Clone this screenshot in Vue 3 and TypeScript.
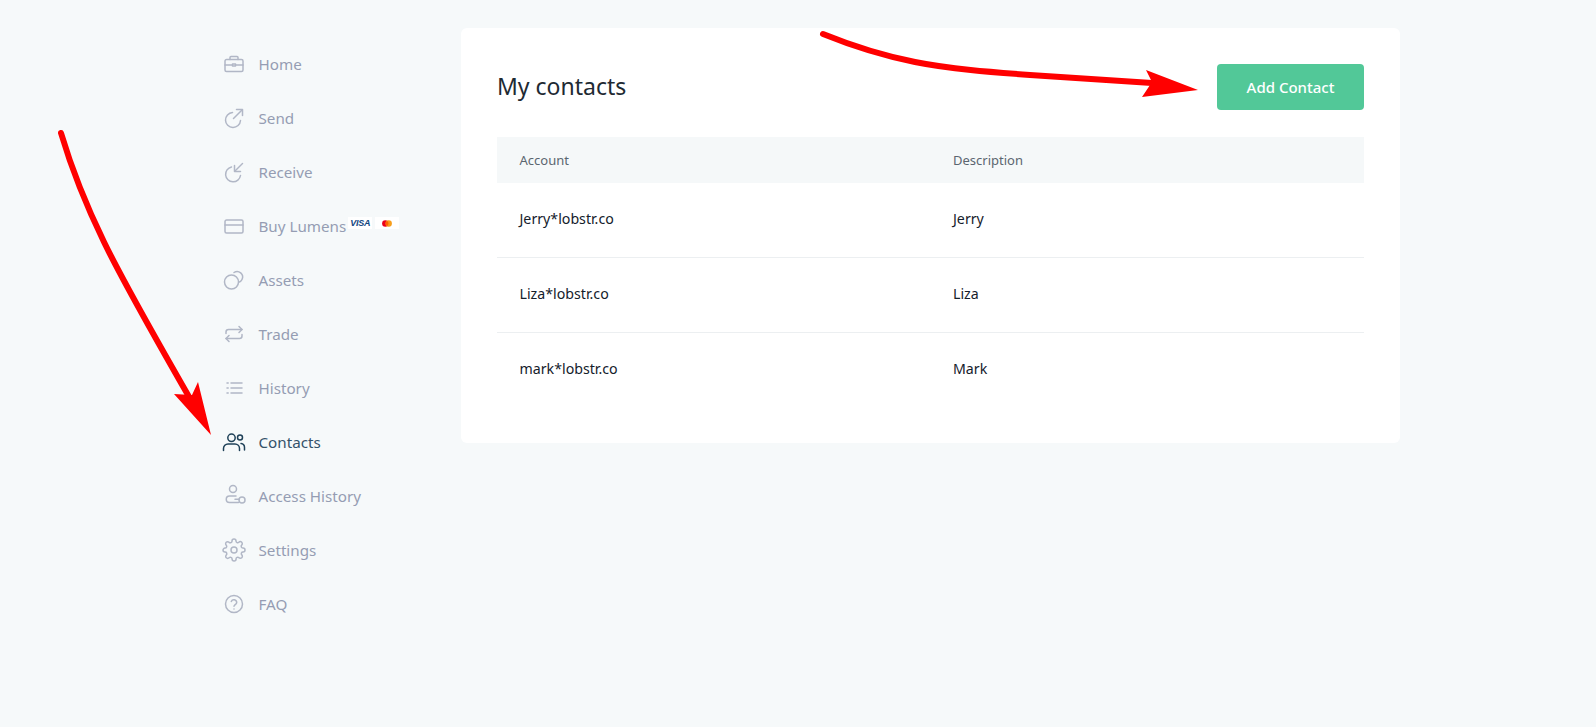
<script setup lang="ts">
interface NavItem {
  label: string
  paths: string[]
  active?: boolean
  cards?: boolean
}

const navItems: NavItem[] = [
  { label: 'Home', paths: ['M4.5 7.5h15a1.5 1.5 0 0 1 1.5 1.5v9a1.5 1.5 0 0 1-1.5 1.5h-15A1.5 1.5 0 0 1 3 18V9a1.5 1.5 0 0 1 1.500-1.500z', 'M8 7.500V5.500a1 1 0 0 1 1-1h6a1 1 0 0 1 1 1v2', 'M3 13h7M14 13h7', 'M10.500 12h3v2h-3z'] },
  { label: 'Send', paths: ['M10.500 6.500a7.500 7.500 0 1 0 8 8', 'M11.500 12.500L20 4', 'M14.500 3.500h6v6'] },
  { label: 'Receive', paths: ['M9.500 7a7.500 7.500 0 1 0 9 8.500', 'M20.500 3.500L13 11', 'M12.500 5.500v6h6'] },
  { label: 'Buy Lumens', cards: true, paths: ['M4.500 6h15a1.500 1.500 0 0 1 1.500 1.500v10a1.500 1.500 0 0 1-1.500 1.500h-15A1.500 1.500 0 0 1 3 17.500v-10A1.500 1.500 0 0 1 4.500 6z', 'M3 11h18'] },
  { label: 'Assets', paths: ['M9.500 21a7 7 0 1 0 0-14 7 7 0 0 0 0 14z', 'M12 4.500a5.500 5.500 0 0 1 8 7 5.500 5.500 0 0 1-2.500 2.500'] },
  { label: 'Trade', paths: ['M4 11.500v-1.500a2.500 2.500 0 0 1 2.500-2.500H20', 'M17 4.500l3 3-3 3', 'M20 12.500v1.500a2.500 2.500 0 0 1-2.500 2.500H4', 'M7 13.500l-3 3 3 3'] },
  { label: 'History', paths: ['M5 7h1.200M5 12h1.200M5 17h1.200', 'M9 7h11M9 12h11M9 17h11'] },
  { label: 'Contacts', active: true, paths: ['M9.500 11.500a3.700 3.700 0 1 0 0-7.400 3.700 3.700 0 0 0 0 7.400z', 'M18 10a2.500 2.500 0 1 0 0-5 2.500 2.500 0 0 0 0 5z', 'M1.500 20.500v-2a4.500 4.500 0 0 1 4.500-4.500h7a4.500 4.500 0 0 1 4.500 4.500v2', 'M19 13.500a4 4 0 0 1 3.500 4v2.500'] },
  { label: 'Access History', paths: ['M11 8.500a3.500 3.500 0 1 0 0-7 3.500 3.500 0 0 0 0 7z', 'M14 12H7.500a3 3 0 0 0 0 6.500h9', 'M20 19a3 3 0 1 0 0-6 3 3 0 0 0 0 6z', 'M13 15.300h4'] },
  { label: 'Settings', paths: ['M12 15a3 3 0 1 0 0-6 3 3 0 0 0 0 6z', 'M19.400 15a1.650 1.650 0 0 0 .33 1.820l.06.06a2 2 0 0 1 0 2.830 2 2 0 0 1-2.830 0l-.06-.06a1.650 1.650 0 0 0-1.820-.33 1.650 1.650 0 0 0-1 1.510V21a2 2 0 0 1-2 2 2 2 0 0 1-2-2v-.09A1.650 1.650 0 0 0 9 19.400a1.650 1.650 0 0 0-1.820.33l-.06.06a2 2 0 0 1-2.830 0 2 2 0 0 1 0-2.830l.06-.06a1.650 1.650 0 0 0 .33-1.820 1.650 1.650 0 0 0-1.510-1H3a2 2 0 0 1-2-2 2 2 0 0 1 2-2h.09A1.650 1.650 0 0 0 4.600 9a1.650 1.650 0 0 0-.33-1.820l-.06-.06a2 2 0 0 1 0-2.830 2 2 0 0 1 2.830 0l.06.06a1.650 1.650 0 0 0 1.820.33H9a1.650 1.650 0 0 0 1-1.510V3a2 2 0 0 1 2-2 2 2 0 0 1 2 2v.09a1.650 1.650 0 0 0 1 1.510 1.650 1.650 0 0 0 1.820-.33l.06-.06a2 2 0 0 1 2.830 0 2 2 0 0 1 0 2.830l-.06.06a1.650 1.650 0 0 0-.33 1.820V9a1.650 1.650 0 0 0 1.510 1H21a2 2 0 0 1 2 2 2 2 0 0 1-2 2h-.09a1.650 1.650 0 0 0-1.510 1z'] },
  { label: 'FAQ', paths: ['M12 20.500a8.500 8.500 0 1 0 0-17 8.500 8.500 0 0 0 0 17z', 'M9.300 9.500a2.800 2.800 0 0 1 5.400 1c0 1.900-2.700 2.300-2.700 3.800', 'M12 17h.01'] }
]

const contacts = [
  { account: 'Jerry*lobstr.co', description: 'Jerry' },
  { account: 'Liza*lobstr.co', description: 'Liza' },
  { account: 'mark*lobstr.co', description: 'Mark' }
]
</script>

<template>
  <div class="page">
    <div class="layout">
      <nav class="sidebar">
        <a
          v-for="item in navItems"
          :key="item.label"
          class="nav-item"
          :class="{ 'nav-item--active': item.active }"
        >
          <svg class="nav-icon" viewBox="0 0 24 24" fill="none" stroke="currentColor" stroke-width="1.5" stroke-linecap="round" stroke-linejoin="round">
            <path v-for="d in item.paths" :key="d" :d="d" />
          </svg>
          <span>{{ item.label }}</span>
          <span v-if="item.cards" class="cards">
            <span class="card-badge visa">VISA</span>
            <span class="card-badge">
              <svg width="10" height="7" viewBox="0 0 10 7">
                <circle cx="3.300" cy="3.500" r="3.200" fill="#eb001b" />
                <circle cx="6.700" cy="3.500" r="3.200" fill="#f79e1b" />
                <path d="M5 .8a3.200 3.200 0 0 1 0 5.400 3.200 3.200 0 0 1 0-5.400z" fill="#ff5f00" />
              </svg>
            </span>
          </span>
        </a>
      </nav>

      <main class="panel">
        <header class="panel-head">
          <h1>My contacts</h1>
          <button class="add-btn" type="button">Add Contact</button>
        </header>
        <div class="table">
          <div class="row row--head">
            <span>Account</span>
            <span>Description</span>
          </div>
          <div v-for="c in contacts" :key="c.account" class="row">
            <span>{{ c.account }}</span>
            <span>{{ c.description }}</span>
          </div>
        </div>
      </main>
    </div>

    <svg class="arrows" width="1596" height="727" viewBox="0 0 1596 727">
      <path d="M61 133C72 170 86 205 104 242C120 275 165 355 192 402" fill="none" stroke="#ff0000" stroke-width="6" stroke-linecap="round" />
      <path d="M211 435L174 394L192 395L198 382z" fill="#ff0000" />
      <path d="M823 34C855 47 885 56 915 62C950 69 990 72 1030 75L1152 83" fill="none" stroke="#ff0000" stroke-width="6" stroke-linecap="round" />
      <path d="M1198 90L1146 70L1152 82L1142 97z" fill="#ff0000" />
    </svg>
  </div>
</template>

<style>
html,
body {
  margin: 0;
  background: #f6f9fa;
}
</style>

<style scoped>
.page {
  position: relative;
  height: 727px;
  overflow: hidden;
  background: #f6f9fa;
  font-family: 'Noto Sans', 'Open Sans', sans-serif;
}

.arrows {
  position: absolute;
  top: 0;
  left: 0;
  pointer-events: none;
}

.layout {
  display: flex;
  width: 1204px;
  margin: 0 auto;
  padding-top: 28px;
}

.sidebar {
  display: flex;
  flex-direction: column;
  box-sizing: border-box;
  width: 265px;
  flex-shrink: 0;
  padding: 9px 0 0 26px;
}

.nav-item {
  display: flex;
  align-items: center;
  height: 54px;
  font-size: 15.2px;
  color: #959db3;
}

.nav-item--active {
  color: #34526a;
}

.nav-icon {
  width: 24px;
  height: 24px;
  margin-right: 12.500px;
  flex-shrink: 0;
  color: #b1b7c6;
}

.nav-item--active .nav-icon {
  color: #1f4158;
}

.cards {
  display: flex;
  gap: 3px;
  margin: -6px 0 0 2px;
}

.card-badge {
  display: flex;
  align-items: center;
  justify-content: center;
  width: 24px;
  height: 12px;
  background: #fff;
}

.visa {
  font-family: 'Liberation Sans', sans-serif;
  font-size: 9px;
  font-weight: 700;
  font-style: italic;
  letter-spacing: -0.2px;
  color: #12477f;
}

.panel {
  box-sizing: border-box;
  width: 939px;
  height: 415px;
  padding: 36px;
  background: #fff;
  border-radius: 6px;
}

.panel-head {
  display: flex;
  align-items: center;
  justify-content: space-between;
  margin-bottom: 27px;
}

h1 {
  margin: 0 0 3px;
  font-size: 23px;
  font-weight: 400;
  color: #1e2a33;
}

.add-btn {
  width: 147px;
  height: 46px;
  padding: 0;
  border: none;
  border-radius: 4px;
  background: #52c898;
  color: #fff;
  font: 500 15px 'Noto Sans', sans-serif;
}

.row {
  display: grid;
  grid-template-columns: 433.500px 1fr;
  align-items: center;
  height: 75px;
  padding: 0 0 4px 22.500px;
  font-size: 14.2px;
  color: #14202b;
  border-bottom: 1px solid #eceff1;
  box-sizing: border-box;
}

.row:last-child {
  border-bottom: none;
}

.row--head {
  height: 46px;
  padding-bottom: 0;
  font-size: 13px;
  color: #5b6670;
  background: #f5f8f9;
  border-bottom: none;
}
</style>
